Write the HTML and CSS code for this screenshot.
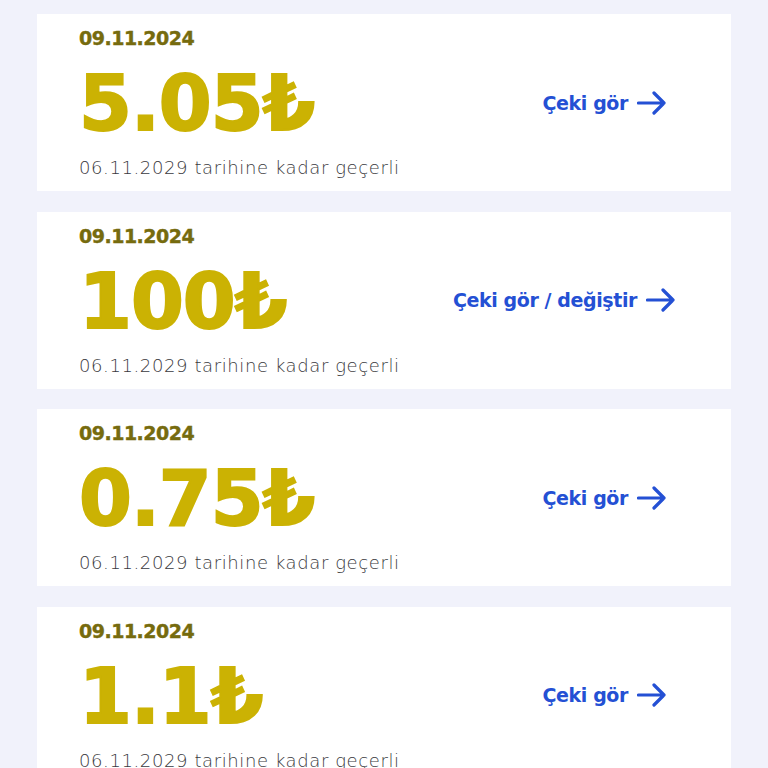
FILE: index.html
```html
<!DOCTYPE html>
<html lang="tr">
<head>
<meta charset="utf-8">
<title>Çekler</title>
<link rel="stylesheet" href="styles.css">
</head>
<body>
<main class="list">
  <section class="card">
    <div class="info">
      <div class="date">09.11.2024</div>
      <div class="amount">5.05₺</div>
      <div class="valid">06.11.2029 tarihine kadar geçerli</div>
    </div>
    <a class="link" href="#">Çeki gör <svg class="arrow" viewBox="0 0 30 24" width="30" height="24"><path d="M1.5 12H27M17 2L27 12L17 22" fill="none" stroke="currentColor" stroke-width="3.2" stroke-linecap="round" stroke-linejoin="round"/></svg></a>
  </section>
  <section class="card card-wide">
    <div class="info">
      <div class="date">09.11.2024</div>
      <div class="amount">100₺</div>
      <div class="valid">06.11.2029 tarihine kadar geçerli</div>
    </div>
    <a class="link" href="#">Çeki gör / değiştir <svg class="arrow" viewBox="0 0 30 24" width="30" height="24"><path d="M1.5 12H27M17 2L27 12L17 22" fill="none" stroke="currentColor" stroke-width="3.2" stroke-linecap="round" stroke-linejoin="round"/></svg></a>
  </section>
  <section class="card">
    <div class="info">
      <div class="date">09.11.2024</div>
      <div class="amount">0.75₺</div>
      <div class="valid">06.11.2029 tarihine kadar geçerli</div>
    </div>
    <a class="link" href="#">Çeki gör <svg class="arrow" viewBox="0 0 30 24" width="30" height="24"><path d="M1.5 12H27M17 2L27 12L17 22" fill="none" stroke="currentColor" stroke-width="3.2" stroke-linecap="round" stroke-linejoin="round"/></svg></a>
  </section>
  <section class="card">
    <div class="info">
      <div class="date">09.11.2024</div>
      <div class="amount">1.1₺</div>
      <div class="valid">06.11.2029 tarihine kadar geçerli</div>
    </div>
    <a class="link" href="#">Çeki gör <svg class="arrow" viewBox="0 0 30 24" width="30" height="24"><path d="M1.5 12H27M17 2L27 12L17 22" fill="none" stroke="currentColor" stroke-width="3.2" stroke-linecap="round" stroke-linejoin="round"/></svg></a>
  </section>
</main>
</body>
</html>
```

FILE: styles.css
```css
html, body {
  margin: 0;
  padding: 0;
  background: #f1f2fb;
  font-family: "DejaVu Sans", "Noto Sans", sans-serif;
}

.list {
  display: flex;
  flex-direction: column;
  gap: 20.5px;
  padding: 14px 37px;
}

.card {
  background: #ffffff;
  height: 177px;
  box-sizing: border-box;
  display: flex;
  align-items: center;
  justify-content: space-between;
  padding: 0 64px 0 42px;
}

.card-wide {
  padding-right: 55px;
}

.info {
  display: flex;
  flex-direction: column;
}

.date {
  font-size: 19px;
  line-height: 24px;
  font-weight: 700;
  color: #766b0e;
  letter-spacing: -0.5px;
  -webkit-text-stroke: 0.4px currentColor;
}

.amount {
  margin-top: 16px;
  font-size: 76px;
  line-height: 76px;
  font-weight: 700;
  color: #cbb203;
  letter-spacing: -1px;
  -webkit-text-stroke: 2px currentColor;
}

.valid {
  margin-top: 15px;
  font-size: 18px;
  line-height: 22px;
  font-weight: 300;
  color: #3a3a40;
  letter-spacing: 0.6px;
}

.link {
  display: flex;
  align-items: center;
  gap: 9px;
  font-size: 19px;
  font-weight: 700;
  color: #2450d4;
  text-decoration: none;
  letter-spacing: -0.4px;
}

.arrow {
  display: block;
}
```
